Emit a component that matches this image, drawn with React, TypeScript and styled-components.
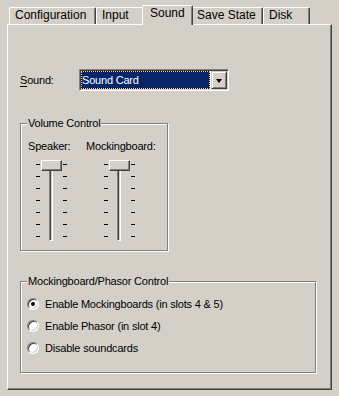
import React from "react";
import styled, { createGlobalStyle, css } from "styled-components";

const Global = createGlobalStyle`
  html, body { margin: 0; padding: 0; background: #d4d0c8; }
  body { width: 339px; height: 396px; overflow: hidden; font-family: "Liberation Sans", Arial, sans-serif; color: #000; }
`;

const Window = styled.div`
  box-sizing: border-box;
  width: 339px;
  height: 396px;
  padding-left: 7px;
  background: #d4d0c8;
  display: flex;
  flex-direction: column;
`;

const TabRow = styled.div`
  display: flex;
  align-items: flex-end;
  height: 24px;
  padding-left: 2px;
  position: relative;
  z-index: 2;
`;

const Tab = styled.div<{ $w: number; $active?: boolean }>`
  box-sizing: border-box;
  width: ${(p) => p.$w}px;
  height: 17px;
  padding: 0 0 0 5px;
  border-top: 1px solid #fff;
  border-left: 1px solid #fff;
  border-right: 1px solid #404040;
  border-top-left-radius: 2px;
  border-top-right-radius: 2px;
  box-shadow: inset -1px 0 #808080;
  background: #d4d0c8;
  font-size: 12px;
  line-height: 15px;
  white-space: nowrap;
  ${(p) =>
    p.$active &&
    css`
      width: ${p.$w + 4}px;
      height: 20px;
      margin: 0 -2px -1px;
      padding-left: 7px;
      position: relative;
      z-index: 3;
    `}
`;

const Panel = styled.div`
  box-sizing: border-box;
  width: 325px;
  height: 366px;
  position: relative;
  z-index: 1;
  border-top: 1px solid #fff;
  border-left: 1px solid #fff;
  border-right: 1px solid #404040;
  border-bottom: 1px solid #404040;
  box-shadow: inset -1px -1px #808080;
  padding: 44px 0 0 12px;
  display: flex;
  flex-direction: column;
  align-items: flex-start;
  font-size: 11px;
  letter-spacing: -0.2px;
  line-height: 13px;
`;

const SoundRow = styled.div`
  display: flex;
  align-items: center;
  height: 22px;
`;

const FieldLabel = styled.label`
  width: 59px;
  u { text-decoration-thickness: 1px; text-underline-offset: 2px; }
`;

const Combo = styled.div`
  box-sizing: border-box;
  width: 150px;
  height: 22px;
  padding: 1px;
  display: flex;
  border: 1px solid;
  border-color: #808080 #fff #fff #808080;
  box-shadow: inset 1px 1px #404040, inset -1px -1px #d4d0c8;
  background: #fff;
`;

const SelectedValue = styled.div`
  box-sizing: border-box;
  flex: 1;
  height: 18px;
  margin-right: 1px;
  border: 1px dotted #f5db95;
  background: linear-gradient(#0a246a, #0a246a) padding-box,
    linear-gradient(#000, #000) border-box;
  color: #fff;
  line-height: 16px;
  white-space: nowrap;
`;

const DropButton = styled.div`
  box-sizing: border-box;
  width: 16px;
  height: 18px;
  display: flex;
  align-items: center;
  justify-content: center;
  border: 1px solid;
  border-color: #d4d0c8 #404040 #404040 #d4d0c8;
  box-shadow: inset 1px 1px #fff, inset -1px -1px #808080;
  background: #d4d0c8;
`;

const Arrow = styled.span`
  width: 0;
  height: 0;
  border-left: 3.5px solid transparent;
  border-right: 3.5px solid transparent;
  border-top: 4px solid #000;
  margin-top: 1px;
`;

const GroupBox = styled.div<{ $w: number; $h: number; $mt: number }>`
  box-sizing: border-box;
  position: relative;
  width: ${(p) => p.$w}px;
  height: ${(p) => p.$h}px;
  margin-top: ${(p) => p.$mt}px;
  border: 1px solid #808080;
  box-shadow: 1px 1px 0 #fff, inset 1px 1px 0 #fff;
`;

const GroupTitle = styled.span`
  position: absolute;
  top: -7px;
  left: 6px;
  padding: 0 1px;
  background: #d4d0c8;
  line-height: 13px;
  white-space: nowrap;
`;

const VolumeBody = styled.div`
  padding-top: 16px;
  display: flex;
  flex-direction: column;
  gap: 7px;
`;

const LabelRow = styled.div`
  display: flex;
  padding-left: 7px;
  height: 13px;
`;

const SliderLabel = styled.span<{ $w?: number }>`
  width: ${(p) => (p.$w ? `${p.$w}px` : "auto")};
  white-space: nowrap;
`;

const SliderRow = styled.div`
  display: flex;
  padding-left: 15px;
  gap: 37px;
`;

const Slider = styled.div`
  width: 31px;
  height: 82px;
  display: flex;
`;

const Ticks = styled.div`
  width: 4px;
  display: flex;
  flex-direction: column;
  gap: 11px;
  padding-top: 4px;
`;

const Tick = styled.div`
  height: 1px;
  background: #000;
`;

const TrackArea = styled.div`
  position: relative;
  width: 23px;
`;

const Channel = styled.div`
  box-sizing: border-box;
  width: 4px;
  height: 77px;
  margin: 4px 0 0 9px;
  border: 1px solid;
  border-color: #808080 #fff #fff #808080;
  box-shadow: inset 1px 1px #404040;
  background: #d4d0c8;
`;

const Thumb = styled.div`
  box-sizing: border-box;
  position: absolute;
  top: 0;
  left: 1px;
  width: 21px;
  height: 11px;
  border: 1px solid;
  border-color: #fff #404040 #404040 #fff;
  box-shadow: inset -1px -1px #808080;
  background: #d4d0c8;
`;

const RadioList = styled.div`
  padding-top: 11px;
  display: flex;
  flex-direction: column;
`;

const RadioRow = styled.label`
  display: flex;
  align-items: center;
  height: 22px;
  padding-left: 6px;
  gap: 6px;
  white-space: nowrap;
`;

const RadioCircle = styled.span<{ $checked?: boolean }>`
  box-sizing: border-box;
  width: 12px;
  height: 12px;
  border-radius: 50%;
  border: 1px solid;
  border-color: #808080 #fff #fff #808080;
  box-shadow: inset 1px 1px #404040, inset -1px -1px #d4d0c8;
  background: #fff;
  display: flex;
  align-items: center;
  justify-content: center;
  &::after {
    content: "";
    width: 4px;
    height: 4px;
    border-radius: 50%;
    background: ${(p) => (p.$checked ? "#000" : "transparent")};
  }
`;

const tabs = [
  { label: "Configuration", w: 87 },
  { label: "Input", w: 48 },
  { label: "Sound", w: 47, active: true },
  { label: "Save State", w: 72 },
  { label: "Disk", w: 47 },
];

const VolumeSlider = () => (
  <Slider>
    <Ticks>
      {Array.from({ length: 7 }).map((_, i) => (
        <Tick key={i} />
      ))}
    </Ticks>
    <TrackArea>
      <Channel />
      <Thumb />
    </TrackArea>
    <Ticks>
      {Array.from({ length: 7 }).map((_, i) => (
        <Tick key={i} />
      ))}
    </Ticks>
  </Slider>
);

const radios = [
  { label: "Enable Mockingboards (in slots 4 & 5)", checked: true },
  { label: "Enable Phasor (in slot 4)" },
  { label: "Disable soundcards" },
];

export default function App() {
  return (
    <>
      <Global />
      <Window>
        <TabRow>
          {tabs.map((t) => (
            <Tab key={t.label} $w={t.w} $active={t.active}>
              {t.label}
            </Tab>
          ))}
        </TabRow>
        <Panel>
          <SoundRow>
            <FieldLabel>
              <u>S</u>ound:
            </FieldLabel>
            <Combo>
              <SelectedValue>Sound Card</SelectedValue>
              <DropButton>
                <Arrow />
              </DropButton>
            </Combo>
          </SoundRow>
          <GroupBox $w={148} $h={128} $mt={32}>
            <GroupTitle>Volume Control</GroupTitle>
            <VolumeBody>
              <LabelRow>
                <SliderLabel $w={58}>Speaker:</SliderLabel>
                <SliderLabel>Mockingboard:</SliderLabel>
              </LabelRow>
              <SliderRow>
                <VolumeSlider />
                <VolumeSlider />
              </SliderRow>
            </VolumeBody>
          </GroupBox>
          <GroupBox $w={296} $h={92} $mt={30}>
            <GroupTitle>Mockingboard/Phasor Control</GroupTitle>
            <RadioList>
              {radios.map((r) => (
                <RadioRow key={r.label}>
                  <RadioCircle $checked={r.checked} />
                  {r.label}
                </RadioRow>
              ))}
            </RadioList>
          </GroupBox>
        </Panel>
      </Window>
    </>
  );
}
